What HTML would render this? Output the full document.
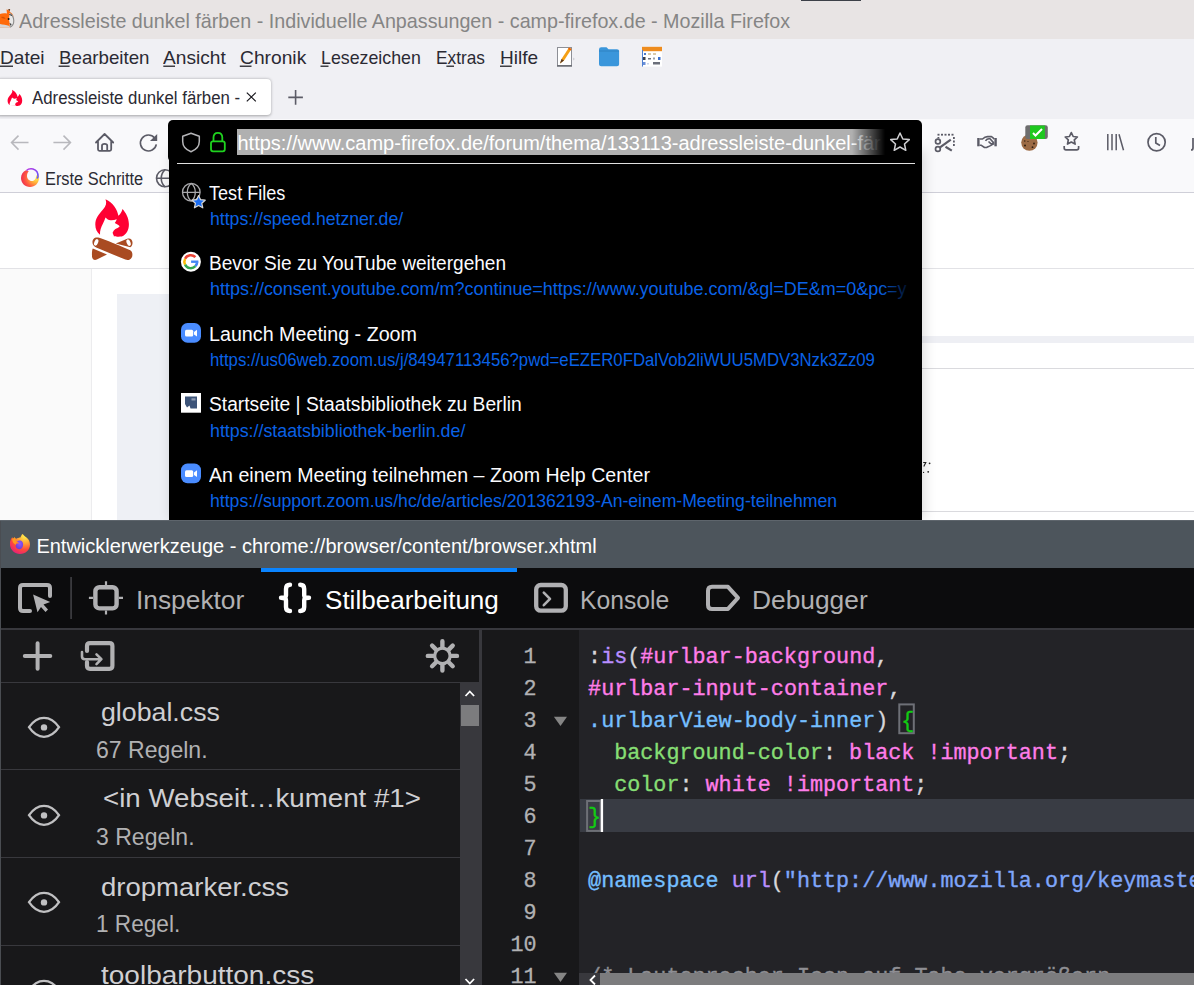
<!DOCTYPE html>
<html><head><meta charset="utf-8">
<style>
*{margin:0;padding:0;box-sizing:border-box}
html,body{width:1194px;height:985px;overflow:hidden;background:#f9f9fb;font-family:"Liberation Sans",sans-serif}
.a{position:absolute}
.t{position:absolute;white-space:pre;line-height:1;transform-origin:0 0}
svg{position:absolute;overflow:visible}
</style></head><body>
<div class="a" style="left:0;top:0;width:1194px;height:39px;background:#e8e4e4"></div>
<div class="a" style="left:801px;top:0;width:60px;height:1px;background:#3c4048"></div>
<div class="a" style="left:0;top:39px;width:1194px;height:40px;background:#f0f0f4"></div>
<div class="a" style="left:0;top:79px;width:1194px;height:40px;background:#f0f0f4"></div>
<div class="a" style="left:-4px;top:79px;width:275px;height:36px;background:#fff;border-radius:4px;box-shadow:0 0.5px 3px rgba(0,0,0,.32)"></div>
<div class="a" style="left:0;top:119px;width:1194px;height:73px;background:#f9f9fb"></div>
<div class="a" style="left:0;top:192px;width:1194px;height:1px;background:#cfcfd8"></div>
<!-- page -->
<div class="a" style="left:0;top:193px;width:1194px;height:75px;background:#fff"></div>
<div class="a" style="left:0;top:268px;width:1194px;height:1px;background:#e2e2e6"></div>
<div class="a" style="left:0;top:269px;width:91px;height:251px;background:#fafafa"></div>
<div class="a" style="left:91px;top:269px;width:1px;height:251px;background:#ececee"></div>
<div class="a" style="left:92px;top:269px;width:1102px;height:251px;background:#fff"></div>
<div class="a" style="left:117px;top:294px;width:60px;height:226px;background:#eef0f5"></div>
<div class="a" style="left:922px;top:336px;width:272px;height:7px;background:#eeeff4"></div>
<div class="a" style="left:922px;top:368px;width:272px;height:1px;background:#dadade"></div>
<div class="a" style="left:922px;top:511px;width:272px;height:1px;background:#dadade"></div>
<svg style="left:0;top:0" width="1194" height="985" viewBox="0 0 1194 985">
<!-- title ff icon partial -->
<defs>
<radialGradient id="ffb" cx="0.75" cy="0.1" r="1.05"><stop offset="0" stop-color="#fff44f"/><stop offset="0.35" stop-color="#ffa436"/><stop offset="0.65" stop-color="#ff4a3a"/><stop offset="1" stop-color="#e31587"/></radialGradient>
<radialGradient id="ffp" cx="0.55" cy="0.35" r="0.7"><stop offset="0" stop-color="#9059ff"/><stop offset="1" stop-color="#6a3bd0"/></radialGradient>
<symbol id="ff" viewBox="0 0 20 20">
<path d="M12.5,0 C14,1.5 15,2.5 16.5,3.5 C19,5.5 20,8 20,10.5 C20,16 15.5,20 10,20 C4.5,20 0,15.5 0,10 C0,7 1,4.8 2.3,3.3 L3,5 L4.5,3.3 L6,5 C7,4 9.5,3.5 10.5,3.5 C11,2.5 11.5,1 12.5,0 Z" fill="url(#ffb)"/>
<path d="M2.3,3.3 L3,5 L4.5,3.3 L6,5 C5.5,6 6,7.5 7.5,8 C6.5,8.5 5.5,9.5 6,11 L3.5,9 C2.5,7.5 2,5.5 2.3,3.3 Z" fill="#ff9a1f"/>
<path d="M7,7.2 C8.5,6.5 11.5,6.3 12.5,8 C13.5,9.5 13.5,12.5 11.5,14.5 C9.5,16 6.5,15 5.8,12.5 C5.5,11 6,10 7.5,9.5 L9.2,9.6 C9,8.7 8,8 7,7.2 Z" fill="url(#ffp)"/>
</symbol>
</defs>
<path d="M0,14 C2,13 5,13 7,13.5 L6.5,9.5 C8,9.5 9.5,10.5 10,12 L12,13.5 L13.5,16 L14,22 C13,25 11.5,27 9,27.5 L0,27.7 Z" fill="#ff6a0a"/>
<path d="M9.5,13 C11,13.5 13,15 13.8,17 L14,23 C13.5,25.5 12,27 9.5,27.6 C10,25 9.5,22 9,20 Z" fill="#e8e8e8"/>
<path d="M0,24 C3,24.5 6,25 9.5,26 L9,27.7 L0,27.7 Z" fill="#d6d6d6"/>
<circle cx="8.6" cy="19" r="1" fill="#111"/>
<path d="M9.5,23 L11.5,24 L10.8,26 Z" fill="#222"/>
<path d="M10,13.5 C12.5,15 13.6,17.5 13.8,20.5 C13.9,23.5 12.5,26 10,27.3" stroke="#8a8a8a" stroke-width="1.1" fill="none"/>
<path d="M8,9.3 L10.2,9 L9.5,11.5 Z" fill="#6b3a1a"/>
<path d="M9.2,14.5 L12,15.5" stroke="#333" stroke-width="0.9"/>
<path d="M1,17 C3,16.5 4.5,17 5.5,18.5 C4,19 2,18.5 1,17 Z" fill="#b84300" opacity=".6"/>
<!-- menu underlines -->
<g fill="#15141a">
<rect x="0" y="65.6" width="13" height="1.2"/>
<rect x="58.6" y="65.6" width="11" height="1.2"/>
<rect x="163.3" y="65.6" width="11.7" height="1.2"/>
<rect x="239.8" y="65.6" width="11.7" height="1.2"/>
<rect x="320.5" y="65.6" width="8" height="1.2"/>
<rect x="446.4" y="65.6" width="7.6" height="1.2"/>
<rect x="500" y="65.6" width="11.7" height="1.2"/>
</g>
<!-- notepad icon -->
<g>
<rect x="557.5" y="47.5" width="14" height="18.5" fill="#fff" stroke="#8d8f96" stroke-width="1"/>
<rect x="557" y="65" width="15" height="1.6" fill="#6d6f76"/>
<path d="M560,63.5 L561.5,59 L569,47.5 L571.5,49 L564,60.5 Z" fill="#f5a014"/>
<path d="M569,47.5 L571.5,49 L570.5,50.5 L568,49 Z" fill="#e9640c"/>
<path d="M560,63.5 L561.5,59 L564,60.5 Z" fill="#5a3a22"/>
<path d="M573,57.5 L575,59 L573,60.5 Z" fill="#d0d0d6"/>
</g>
<!-- folder -->
<path d="M599,49.5 Q599,47.2 601.3,47.2 L606.5,47.2 L608.5,49.2 L617,49.2 Q619.1,49.2 619.1,51.4 L619.1,64.2 Q619.1,66.3 617,66.3 L601.2,66.3 Q599,66.3 599,64.2 Z" fill="#3a96db"/>
<path d="M599,51 L619.1,51" stroke="#2f82c2" stroke-width="1"/>
<!-- calendar -->
<g>
<rect x="642" y="46.8" width="20" height="19.8" fill="#fff"/>
<rect x="642" y="46.8" width="20" height="4.4" fill="#ee8c1e"/>
<rect x="644" y="53" width="2" height="2" fill="#4a79c8"/><rect x="648" y="53" width="3" height="2" fill="#d9c9a8"/><rect x="653" y="53" width="3" height="2" fill="#d9c9a8"/>
<rect x="643" y="57" width="2.5" height="3" fill="#3b3f4a"/><rect x="648" y="58" width="3" height="1.5" fill="#6b6f7a"/><rect x="653" y="57.5" width="2" height="2" fill="#9aa0aa"/><rect x="658" y="57" width="2.5" height="3" fill="#3a6fd0"/>
<rect x="643" y="62" width="2.5" height="3" fill="#6a8fd8"/><rect x="647" y="63" width="2" height="1.5" fill="#c8d4ea"/><rect x="653" y="62" width="7" height="2.5" fill="#6b6f7a"/>
<rect x="642" y="50" width="1" height="16.6" fill="#4d7fd0"/>
</g>
<!-- tab flame favicon -->
<g transform="translate(7.5 89.8) scale(0.435 0.43) translate(-95.1 -199.3)"><path d="M105.5,199.3 C107,203 106,206 103,209.5 C98,215 95.3,219 95.3,224.5 C95.3,229 97,232.5 100,234.8 L114.5,236.3 C116,236.8 119,236.8 121.8,236.6 C126.5,234.5 129,230 128.9,224 C128.7,217.5 126,213 122.5,208.9 C121.8,211.5 120.5,214 118.3,215.8 C117.5,210 113.5,203 105.5,199.3 Z" fill="#ff0033"/><path d="M100,234.6 C99.8,231 101,227 103,223.5 C104,221.5 104.8,219.5 105.5,217.4 C107,219 108.5,220 110.5,220.3 C112.5,220.5 114.8,220 116.8,219.2 C116.3,220.8 115.6,222 114.8,223 C116.5,223.8 118.5,225 119.7,226.3 C118.5,227.8 116.8,228.6 115.4,229.1 C114.2,230 113.3,231.3 112.6,232.7 C113,234 113.6,235.3 114.2,236.4 L100.5,236.4 Z" fill="#fff"/></g>
<!-- tab close x and + -->
<path d="M246.8,92.6 L255.8,101.4 M255.8,92.6 L246.8,101.4" stroke="#15141a" stroke-width="1.15"/>
<path d="M288.3,97.4 L302.9,97.4 M295.6,90 L295.6,104.7" stroke="#5b5b66" stroke-width="1.6"/>
<!-- nav back/forward -->
<path d="M28.5,142.6 L11.8,142.6 M18.5,135.6 L11.5,142.6 L18.5,149.6" stroke="#b8b8bd" stroke-width="1.5" fill="none"/>
<path d="M53.4,142.6 L70.3,142.6 M63.5,135.6 L70.5,142.6 L63.5,149.6" stroke="#b8b8bd" stroke-width="1.5" fill="none"/>
<!-- home -->
<path d="M96,142.5 L104.6,134 L113.2,142.5 M98,140.5 L98,149.3 Q98,150.8 99.5,150.8 L109.7,150.8 Q111.2,150.8 111.2,149.3 L111.2,140.5 M102,150.8 L102,145.5 Q102,143.8 104.6,143.8 Q107.2,143.8 107.2,145.5 L107.2,150.8" stroke="#5b5b66" stroke-width="1.8" fill="none" stroke-linejoin="round" stroke-linecap="round"/>
<!-- reload -->
<path d="M154.6,137.9 A8,8 0 1 0 156.3,144.4" stroke="#5b5b66" stroke-width="1.65" fill="none"/>
<path d="M157.2,133.9 L157.2,141.1 L150,141.1 Z" fill="#5b5b66"/>
<!-- right nav icons -->
<g fill="#5b5b66">
<rect x="937.5" y="133.8" width="2" height="1.8"/><rect x="941" y="133.8" width="2" height="1.8"/><rect x="944.5" y="133.8" width="2" height="1.8"/><rect x="948" y="133.8" width="2" height="1.8"/><rect x="951.5" y="133.8" width="2" height="1.8"/>
<rect x="953" y="137" width="1.8" height="2"/><rect x="953" y="140.5" width="1.8" height="2"/><rect x="953" y="144" width="1.8" height="2"/>
<rect x="937.5" y="137" width="1.8" height="1.5"/>
</g>
<g stroke="#5b5b66" stroke-width="1.7" fill="none">
<circle cx="937.9" cy="141.5" r="2.4"/><circle cx="937.9" cy="149" r="2.4"/>
<path d="M940,147.3 L950.8,139.6" stroke-width="2.2"/>
<path d="M945.5,146.8 L951.8,150.6" stroke-width="2.2"/>
</g>
<!-- handshake -->
<g fill="#5b5b66"><rect x="977.2" y="138" width="2.4" height="8.3"/><rect x="994.4" y="138" width="2.4" height="8.3"/></g>
<g stroke="#5b5b66" stroke-width="1.6" fill="none" stroke-linejoin="round">
<path d="M979.6,139 L982.5,139 C984,137.5 985.5,136.6 987.5,136.6 L991.5,136.6 C992.5,137.2 993.3,138.2 994.4,139"/>
<path d="M979.6,145.2 L981,145.2 L984.5,147.5 L986.5,147.5 L988.5,146.6 L990.5,145.6 L993,144 L994.4,144"/>
<path d="M985.5,140.8 C986.5,139.2 988,138.4 990,138.8 L993.5,142.6 C992.8,143.8 991.8,144.2 990.8,143.6 L988.5,141.5"/>
</g>
<g stroke="#5b5b66" stroke-width="1.7" fill="none">
<!-- star tray -->
<path d="M1071.3,132.6 L1073.2,136.5 L1077.4,137 L1074.3,139.9 L1075.1,144.1 L1071.3,142 L1067.5,144.1 L1068.3,139.9 L1065.2,137 L1069.4,136.5 Z" stroke-linejoin="round"/>
<path d="M1064.2,146 L1064.2,148 Q1064.2,149.8 1066,149.8 L1076.8,149.8 Q1078.6,149.8 1078.6,148 L1078.6,146"/>
<!-- library -->
<path d="M1107.8,134 L1107.8,150.3 M1112,134 L1112,150.3 M1116.2,134 L1116.2,150.3 M1119,134.3 L1123.5,150.3" stroke-width="1.5"/>
<!-- clock -->
<circle cx="1156.6" cy="142.2" r="8.6"/>
<path d="M1155.8,137 L1155.8,143 L1160,145.5"/>
<!-- partial -->
<path d="M1193,138 L1193,148 Q1193,150 1191,150"/>
</g>
<!-- cookie -->
<circle cx="1029.4" cy="142.6" r="8.2" fill="#9c6b45"/>
<g fill="#2f1c0e"><circle cx="1025" cy="145.6" r="1"/><circle cx="1032.5" cy="147.2" r="0.9"/><circle cx="1034" cy="143.5" r="0.9"/><circle cx="1024.8" cy="141" r="0.7"/><circle cx="1028" cy="141.5" r="0.6"/></g>
<rect x="1025.3" y="125.2" width="22.5" height="13.8" rx="2.2" fill="#6e6e6e"/>
<rect x="1030" y="125.5" width="14.9" height="13.5" fill="#1ec81e"/>
<path d="M1033,133 L1035.5,135.5 L1042,129" stroke="#fff" stroke-width="2" fill="none"/>
<!-- bookmarks ff logo -->
<defs><radialGradient id="ffb2" cx="0.85" cy="0.45" r="1"><stop offset="0" stop-color="#fff44f"/><stop offset="0.3" stop-color="#ffb03a"/><stop offset="0.6" stop-color="#ff5a40"/><stop offset="1" stop-color="#e31557"/></radialGradient>
<linearGradient id="ffarc" x1="0" y1="0" x2="1" y2="1"><stop offset="0" stop-color="#b833e1"/><stop offset="1" stop-color="#5b5bff"/></linearGradient></defs>
<path d="M26,170.2 C23,171.5 21,174.5 21,178 C21,183 25,187 30,187 C35,187 39,183 39,178 C39,176.5 38.7,175.3 38.2,174.2 L36,176 C36,179.5 34,181 32,181 C29,181 27,178.5 27,176 C27,174 27.5,172.5 28.8,171.2 Z" fill="url(#ffb2)"/>
<path d="M26.5,170.5 C28,169 30.5,168.6 33,169 C36.5,170 38.3,173 38,177 L36.7,178.5" stroke="url(#ffarc)" stroke-width="1.5" fill="none"/>
<!-- bookmarks globe -->
<g stroke="#5b5b66" stroke-width="1.6" fill="none">
<circle cx="165" cy="178.3" r="8.5"/>
<path d="M156.5,178.3 L173.5,178.3 M165,169.8 C160,174 160,182.6 165,186.8"/>
</g>
<!-- campfire logo -->
<path d="M105.5,199.3 C107,203 106,206 103,209.5 C98,215 95.3,219 95.3,224.5 C95.3,229 97,232.5 100,234.8 L114.5,236.3 C116,236.8 119,236.8 121.8,236.6 C126.5,234.5 129,230 128.9,224 C128.7,217.5 126,213 122.5,208.9 C121.8,211.5 120.5,214 118.3,215.8 C117.5,210 113.5,203 105.5,199.3 Z" fill="#ff0033"/>
<path d="M100,234.6 C99.8,231 101,227 103,223.5 C104,221.5 104.8,219.5 105.5,217.4 C107,219 108.5,220 110.5,220.3 C112.5,220.5 114.8,220 116.8,219.2 C116.3,220.8 115.6,222 114.8,223 C116.5,223.8 118.5,225 119.7,226.3 C118.5,227.8 116.8,228.6 115.4,229.1 C114.2,230 113.3,231.3 112.6,232.7 C113,234 113.6,235.3 114.2,236.4 L100.5,236.4 Z" fill="#fff"/>
<g fill="#a94b22">
<path d="M96,237.6 C98,237 100.5,237.8 118,245 L130.2,250.2 C132.6,251.5 133,255.5 131.6,257.8 C130.2,260 127.8,260.6 125.3,259.6 L96.2,247.6 C92.8,246.2 91.6,242.3 93,239.8 C93.6,238.6 94.7,237.9 96,237.6 Z"/>
<path d="M115.8,243.6 L127.2,238.8 C129.8,237.6 132.2,239.2 132.5,242.2 C132.7,244.6 131.8,246.3 130.3,247.2 Z"/>
<path d="M92.8,248.6 L107,254.4 L96.8,259.6 C94.2,260.8 92.1,259.2 92,256.2 C91.9,252.5 91.9,250.2 92.8,248.6 Z"/>
</g>
<ellipse cx="96.2" cy="242.4" rx="1.9" ry="3.4" fill="#fff" transform="rotate(22 96.2 242.4)"/>
<ellipse cx="128.6" cy="242.6" rx="1.9" ry="3.4" fill="#fff" transform="rotate(-22 128.6 242.6)"/>
</svg>

<!-- popup -->
<div class="a" style="left:169px;top:150px;width:753px;height:370px;background:#000;box-shadow:2px 0 12px rgba(0,0,0,.15)"></div>
<div class="a" style="left:168px;top:120px;width:754px;height:42px;background:#000;border-radius:5px 5px 0 5px"></div>
<div class="a" style="left:237px;top:129px;width:648px;height:26px;background:#b0b0b0"></div>

<div class="a" style="left:177px;top:163px;width:738px;height:1px;background:#e0e0e0"></div>
<!-- devtools -->
<div class="a" style="left:0;top:520px;width:1194px;height:48px;background:#4d555c"></div>
<div class="a" style="left:0;top:568px;width:1194px;height:60px;background:#0c0c0d"></div>
<div class="a" style="left:261px;top:568px;width:256px;height:4px;background:#0a84ff"></div>
<div class="a" style="left:71px;top:577px;width:1px;height:42px;background:#3a3a3e"></div>
<div class="a" style="left:0;top:628px;width:1194px;height:2px;background:#38383d"></div>
<div class="a" style="left:0;top:630px;width:479px;height:355px;background:#18181a"></div>
<div class="a" style="left:0;top:682px;width:479px;height:1px;background:#38383d"></div>
<div class="a" style="left:479px;top:630px;width:3px;height:355px;background:#38383d"></div>
<div class="a" style="left:460px;top:683px;width:19px;height:302px;background:#38383d"></div>
<div class="a" style="left:461px;top:705px;width:18px;height:21px;background:#7c7c7e"></div>
<div class="a" style="left:0;top:769px;width:460px;height:1px;background:#38383d"></div>
<div class="a" style="left:0;top:857px;width:460px;height:1px;background:#38383d"></div>
<div class="a" style="left:0;top:945px;width:460px;height:1px;background:#38383d"></div>
<div class="a" style="left:0;top:520px;width:1px;height:465px;background:#4a4d52"></div>
<div class="a" style="left:0;top:520px;width:1194px;height:1px;background:#5e656c"></div>
<div class="a" style="left:482px;top:630px;width:97px;height:355px;background:#18181a"></div>
<div class="a" style="left:579px;top:630px;width:615px;height:355px;background:#232327"></div>
<div class="a" style="left:580px;top:799px;width:614px;height:33px;background:#393c44"></div>
<svg style="left:0;top:0" width="1194" height="985" viewBox="0 0 1194 985">
<!-- popup shield -->
<path d="M191,133.2 L199.3,136.2 L199.3,141.5 C199.3,146.5 196,149.8 191,151.7 C186,149.8 182.7,146.5 182.7,141.5 L182.7,136.2 Z" stroke="#b5b5b8" stroke-width="1.5" fill="none" stroke-linejoin="round"/>
<!-- lock -->
<rect x="211" y="141.3" width="13.8" height="10" rx="2" stroke="#1fd21f" stroke-width="1.8" fill="none"/>
<path d="M213.5,141.3 L213.5,137.5 C213.5,134.5 215.5,132.8 217.9,132.8 C220.3,132.8 222.3,134.5 222.3,137.5 L222.3,141.3" stroke="#1fd21f" stroke-width="1.8" fill="none"/>
<!-- popup star -->
<path d="M900,133 L902.8,139 L909.3,139.6 L904.5,144 L905.8,150.3 L900,147 L894.2,150.3 L895.5,144 L890.7,139.6 L897.2,139 Z" stroke="#d0d0d3" stroke-width="1.5" fill="none" stroke-linejoin="round"/>
<!-- row1 globe + star -->
<g stroke="#a8a8ab" stroke-width="1.3" fill="none">
<circle cx="191.3" cy="192.3" r="8.8"/>
<path d="M182.5,192.3 L200,192.3 M191.3,183.5 C186,187.5 186,197 191.3,201 M191.3,183.5 C196.6,187.5 196.6,197 191.3,201"/>
</g>
<path d="M198.6,195.5 L200.6,199.7 L205.2,200.2 L201.8,203.3 L202.8,207.8 L198.6,205.4 L194.4,207.8 L195.4,203.3 L192,200.2 L196.6,199.7 Z" fill="#1a6cf0" stroke="#d8d8d8" stroke-width="1.2" stroke-linejoin="round"/>
<!-- google -->
<circle cx="190.9" cy="261.7" r="10" fill="#fff"/>
<rect x="191.1" y="260.5" width="7.3" height="2.4" fill="#4285f4"/>
<path d="M197.1,262.5 A6.3,6.3 0 0 1 195.4,266.2" stroke="#4285f4" stroke-width="2.5" fill="none"/>
<path d="M195.4,257.2 A6.3,6.3 0 0 0 185.1,258.8" stroke="#ea4335" stroke-width="2.5" fill="none"/>
<path d="M185.1,258.8 A6.3,6.3 0 0 0 185.1,264.6" stroke="#fbbc05" stroke-width="2.5" fill="none"/>
<path d="M185.1,264.6 A6.3,6.3 0 0 0 195.4,266.2" stroke="#34a853" stroke-width="2.5" fill="none"/>
<!-- zoom 1 -->
<rect x="181" y="323" width="20" height="19.7" rx="6.5" fill="#4a8cff"/>
<rect x="185" y="329.8" width="8.2" height="6.8" rx="1.5" fill="#fff"/>
<path d="M194,332 L197,329.8 L197,336.5 L194,334.5 Z" fill="#fff"/>
<!-- staatsbib -->
<rect x="181" y="393" width="20" height="19.7" fill="#fff"/>
<path d="M185,396.6 L197,396.6 L197,408.5 L190.5,408.5 L189.5,405.5 L187,407.5 L185,404 Z" fill="#3d5479"/>
<rect x="191.5" y="398.3" width="4" height="2.2" fill="#8d9bb2"/>
<!-- zoom 2 -->
<rect x="181" y="463.5" width="20" height="19.7" rx="6.5" fill="#4a8cff"/>
<rect x="185" y="470.3" width="8.2" height="6.8" rx="1.5" fill="#fff"/>
<path d="M194,472.5 L197,470.3 L197,477 L194,475 Z" fill="#fff"/>

<!-- devtools title ff icon -->
<use href="#ff" x="9.9" y="533.9" width="20.1" height="20.1"/>
<!-- devtools picker -->
<g stroke="#b1b1b3" stroke-width="4" fill="none" stroke-linecap="round" stroke-linejoin="round">
<path d="M50,596 L50,588 Q50,585 47,585 L23,585 Q20,585 20,588 L20,608 Q20,611 23,611 L30,611"/>
<path d="M106,581.2 L106,585 M106,610.5 L106,614.6 M88.9,597.8 L93,597.8 M118.8,597.8 L123,597.8" stroke-width="2.2" stroke-linecap="butt"/>
<rect x="95.4" y="587.2" width="21.2" height="21.2" rx="4" stroke-width="4.4"/>
</g>
<path d="M33.1,594.6 L50.2,602 L43.5,604.5 L48,609.5 L45.5,612 L41,607 L37.5,612.2 Z" fill="#b1b1b3"/>
<rect x="70.2" y="577" width="1.6" height="42" fill="#3b3b3f"/>
<!-- braces -->
<g stroke="#fff" stroke-width="4.4" fill="none" stroke-linecap="round" stroke-linejoin="round">
<path d="M290,584.8 Q286,584.8 286,589 L286,595.5 Q286,597.8 281,597.8 Q286,597.8 286,600.2 L286,607 Q286,611 290,611"/>
<path d="M300.2,584.8 Q304.2,584.8 304.2,589 L304.2,595.5 Q304.2,597.8 309,597.8 Q304.2,597.8 304.2,600.2 L304.2,607 Q304.2,611 300.2,611"/>
</g>
<!-- console -->
<rect x="536.2" y="585" width="29.6" height="25.7" rx="4.5" stroke="#b1b1b3" stroke-width="4.3" fill="none"/>
<path d="M543.8,592.6 L550,598.9 L543.8,605.2" stroke="#b1b1b3" stroke-width="2.6" fill="none" stroke-linecap="round" stroke-linejoin="round"/>
<!-- debugger -->
<path d="M712,586.8 L728,586.8 L738,597.8 L728,608.9 L712,608.9 Q708,608.9 708,604.9 L708,590.8 Q708,586.8 712,586.8 Z" stroke="#b1b1b3" stroke-width="4" fill="none" stroke-linejoin="round"/>
<!-- left toolbar -->
<g stroke="#b1b1b3" fill="none" stroke-linecap="round">
<path d="M24.8,656.1 L50.3,656.1 M37.6,643.2 L37.6,668.7" stroke-width="4"/>
<path d="M87,651 L87,646 Q87,643.2 90,643.2 L109.5,643.2 Q112.4,643.2 112.4,646 L112.4,665.8 Q112.4,668.8 109.5,668.8 L90,668.8 Q87,668.8 87,665.8 L87,662" stroke-width="4.2"/>
<path d="M82,652 L82,656.5 Q82,659.2 85,659.2 L101,659.2 M96.5,654.3 L101.4,659.2 L96.5,664.1" stroke-width="2.6" stroke-linejoin="round"/>
</g>
<!-- gear -->
<g stroke="#b1b1b3" fill="none">
<circle cx="442.4" cy="655.9" r="7.7" stroke-width="3.2"/>
<g stroke-width="4.4" stroke-linecap="round">
<path d="M442.4,641.3 L442.4,647 M442.4,664.8 L442.4,670.5 M427.8,655.9 L433.5,655.9 M451.3,655.9 L457,655.9 M432.1,645.6 L436.1,649.6 M448.7,662.2 L452.7,666.2 M452.7,645.6 L448.7,649.6 M436.1,662.2 L432.1,666.2"/>
</g>
</g>
<!-- eyes -->
<g stroke="#c0c0c2" stroke-width="2.3" fill="none">
<path d="M29,727.2 C33.5,720.5 38.5,717.8 44,717.8 C49.5,717.8 54.5,720.5 59,727.2 C54.5,733.9 49.5,736.8 44,736.8 C38.5,736.8 33.5,733.9 29,727.2 Z"/>
<path d="M29,815.2 C33.5,808.5 38.5,805.8 44,805.8 C49.5,805.8 54.5,808.5 59,815.2 C54.5,821.9 49.5,824.8 44,824.8 C38.5,824.8 33.5,821.9 29,815.2 Z"/>
<path d="M29,902.2 C33.5,895.5 38.5,892.8 44,892.8 C49.5,892.8 54.5,895.5 59,902.2 C54.5,908.9 49.5,911.8 44,911.8 C38.5,911.8 33.5,908.9 29,902.2 Z"/>
<path d="M29,990.2 C33.5,983.5 38.5,980.8 44,980.8 C49.5,980.8 54.5,983.5 59,990.2"/>
</g>
<g fill="#c0c0c2"><circle cx="44" cy="727.4" r="3.2"/><circle cx="44" cy="815.4" r="3.2"/><circle cx="44" cy="902.4" r="3.2"/></g>
<!-- scrollbar arrows -->
<path d="M465.5,696 L469.8,691.5 L474.1,696" stroke="#fff" stroke-width="1.8" fill="none"/>
<path d="M465.5,979 L469.8,983.5 L474.1,979" stroke="#fff" stroke-width="1.8" fill="none"/>
<!-- fold triangles -->
<path d="M553.9,716.7 L567,716.7 L560.5,726 Z" fill="#858585"/>
<path d="M553.9,972.7 L567,972.7 L560.5,982 Z" fill="#858585"/>
<!-- bracket boxes & cursor -->
<rect x="587.1" y="801" width="13.5" height="29.9" stroke="#6e7077" stroke-width="2" fill="none"/>
<rect x="899.3" y="704.4" width="14.5" height="28.8" stroke="#6e7077" stroke-width="2" fill="none"/>
<rect x="600.8" y="799" width="2.3" height="33" fill="#fff"/>
<!-- h scrollbar arrow -->
<path d="M595,975.5 L590.5,980 L595,984.5" stroke="#fff" stroke-width="1.8" fill="none"/>
</svg>

<span class="t" id="t0" style="left:19.00px;top:11.05px;font-size:20.3px;color:#858585;font-family:'Liberation Sans',sans-serif;transform:scaleX(0.9717);">Adressleiste dunkel färben - Individuelle Anpassungen - camp-firefox.de - Mozilla Firefox</span>
<span class="t" id="t1" style="left:0.00px;top:47.65px;font-size:19px;color:#2b2a33;font-family:'Liberation Sans',sans-serif;transform:scaleX(1.0042);">Datei</span>
<span class="t" id="t2" style="left:58.60px;top:47.65px;font-size:19px;color:#2b2a33;font-family:'Liberation Sans',sans-serif;transform:scaleX(0.9849);">Bearbeiten</span>
<span class="t" id="t3" style="left:163.30px;top:47.65px;font-size:19px;color:#2b2a33;font-family:'Liberation Sans',sans-serif;transform:scaleX(1.0070);">Ansicht</span>
<span class="t" id="t4" style="left:239.80px;top:47.65px;font-size:19px;color:#2b2a33;font-family:'Liberation Sans',sans-serif;transform:scaleX(1.0117);">Chronik</span>
<span class="t" id="t5" style="left:320.80px;top:47.65px;font-size:19px;color:#2b2a33;font-family:'Liberation Sans',sans-serif;transform:scaleX(0.9359);">Lesezeichen</span>
<span class="t" id="t6" style="left:435.70px;top:47.65px;font-size:19px;color:#2b2a33;font-family:'Liberation Sans',sans-serif;transform:scaleX(0.9086);">Extras</span>
<span class="t" id="t7" style="left:500.00px;top:47.65px;font-size:19px;color:#2b2a33;font-family:'Liberation Sans',sans-serif;transform:scaleX(1.0034);">Hilfe</span>
<span class="t" id="t8" style="left:32.20px;top:88.70px;font-size:18px;color:#2b2a33;font-family:'Liberation Sans',sans-serif;transform:scaleX(0.9327);">Adressleiste dunkel färben -</span>
<span class="t" id="t9" style="left:45.20px;top:170.00px;font-size:18px;color:#2b2a33;font-family:'Liberation Sans',sans-serif;transform:scaleX(0.9087);">Erste Schritte</span>
<span class="t" id="t10" style="left:237.50px;top:132.90px;font-size:20px;color:#fff;font-family:'Liberation Sans',sans-serif;">https://www.camp-firefox.de/forum/thema/133113-adressleiste-dunkel-fär</span>
<span class="t" id="t11" style="left:208.70px;top:183.84px;font-size:19.6px;color:#fbfbfe;font-family:'Liberation Sans',sans-serif;transform:scaleX(0.9231);">Test Files</span>
<span class="t" id="t12" style="left:209.50px;top:210.88px;font-size:17.9px;color:#0a62e6;font-family:'Liberation Sans',sans-serif;transform:scaleX(0.9857);">https://speed.hetzner.de/</span>
<span class="t" id="t13" style="left:208.70px;top:254.39px;font-size:19.6px;color:#fbfbfe;font-family:'Liberation Sans',sans-serif;transform:scaleX(0.9727);">Bevor Sie zu YouTube weitergehen</span>
<span class="t" id="t14" style="left:209.50px;top:281.44px;font-size:17.9px;color:#0a62e6;font-family:'Liberation Sans',sans-serif;transform:scaleX(1.0035);">https://consent.youtube.com/m?continue=https://www.youtube.com/&amp;gl=DE&amp;m=0&amp;pc=y</span>
<span class="t" id="t15" style="left:208.70px;top:324.94px;font-size:19.6px;color:#fbfbfe;font-family:'Liberation Sans',sans-serif;transform:scaleX(1.0050);">Launch Meeting - Zoom</span>
<span class="t" id="t16" style="left:209.50px;top:351.98px;font-size:17.9px;color:#0a62e6;font-family:'Liberation Sans',sans-serif;transform:scaleX(0.9362);">https://us06web.zoom.us/j/84947113456?pwd=eEZER0FDalVob2liWUU5MDV3Nzk3Zz09</span>
<span class="t" id="t17" style="left:208.70px;top:395.49px;font-size:19.6px;color:#fbfbfe;font-family:'Liberation Sans',sans-serif;transform:scaleX(0.9811);">Startseite | Staatsbibliothek zu Berlin</span>
<span class="t" id="t18" style="left:209.50px;top:422.53px;font-size:17.9px;color:#0a62e6;font-family:'Liberation Sans',sans-serif;transform:scaleX(0.9953);">https://staatsbibliothek-berlin.de/</span>
<span class="t" id="t19" style="left:208.70px;top:466.04px;font-size:19.6px;color:#fbfbfe;font-family:'Liberation Sans',sans-serif;transform:scaleX(0.9997);">An einem Meeting teilnehmen – Zoom Help Center</span>
<span class="t" id="t20" style="left:209.50px;top:493.08px;font-size:17.9px;color:#0a62e6;font-family:'Liberation Sans',sans-serif;transform:scaleX(0.9851);">https://support.zoom.us/hc/de/articles/201362193-An-einem-Meeting-teilnehmen</span>
<span class="t" id="t21" style="left:36.40px;top:535.60px;font-size:20px;color:#ffffff;font-family:'Liberation Sans',sans-serif;transform:scaleX(1.0000);">Entwicklerwerkzeuge - chrome://browser/content/browser.xhtml</span>
<span class="t" id="t22" style="left:135.50px;top:586.85px;font-size:26.3px;color:#b1b1b3;font-family:'Liberation Sans',sans-serif;transform:scaleX(1.0010);">Inspektor</span>
<span class="t" id="t23" style="left:325.00px;top:586.85px;font-size:26.3px;color:#ffffff;font-family:'Liberation Sans',sans-serif;transform:scaleX(0.9910);">Stilbearbeitung</span>
<span class="t" id="t24" style="left:580.20px;top:586.85px;font-size:26.3px;color:#b1b1b3;font-family:'Liberation Sans',sans-serif;transform:scaleX(0.9395);">Konsole</span>
<span class="t" id="t25" style="left:752.30px;top:586.85px;font-size:26.3px;color:#b1b1b3;font-family:'Liberation Sans',sans-serif;transform:scaleX(1.0016);">Debugger</span>
<span class="t" id="t26" style="left:100.50px;top:699.38px;font-size:26.5px;color:#cfcfd2;font-family:'Liberation Sans',sans-serif;transform:scaleX(1.0090);">global.css</span>
<span class="t" id="t27" style="left:96.30px;top:737.50px;font-size:24px;color:#b1b1b3;font-family:'Liberation Sans',sans-serif;transform:scaleX(0.9612);">67 Regeln.</span>
<span class="t" id="t28" style="left:102.60px;top:785.18px;font-size:26.5px;color:#cfcfd2;font-family:'Liberation Sans',sans-serif;transform:scaleX(1.0441);">&lt;in Webseit…kument #1&gt;</span>
<span class="t" id="t29" style="left:96.30px;top:825.00px;font-size:24px;color:#b1b1b3;font-family:'Liberation Sans',sans-serif;transform:scaleX(0.9594);">3 Regeln.</span>
<span class="t" id="t30" style="left:100.50px;top:873.98px;font-size:26.5px;color:#cfcfd2;font-family:'Liberation Sans',sans-serif;transform:scaleX(1.0376);">dropmarker.css</span>
<span class="t" id="t31" style="left:96.30px;top:912.10px;font-size:24px;color:#b1b1b3;font-family:'Liberation Sans',sans-serif;transform:scaleX(0.9426);">1 Regel.</span>
<span class="t" id="t32" style="left:100.50px;top:961.98px;font-size:26.5px;color:#cfcfd2;font-family:'Liberation Sans',sans-serif;transform:scaleX(1.0562);">toolbarbutton.css</span>
<span class="t" id="t33" style="left:523.45px;top:647.27px;font-size:21.75px;color:#b1b1b3;font-family:'Liberation Mono',monospace;-webkit-text-stroke:0.3px #b1b1b3;">1</span>
<span class="t" id="t34" style="left:523.45px;top:679.27px;font-size:21.75px;color:#b1b1b3;font-family:'Liberation Mono',monospace;-webkit-text-stroke:0.3px #b1b1b3;">2</span>
<span class="t" id="t35" style="left:523.45px;top:711.27px;font-size:21.75px;color:#b1b1b3;font-family:'Liberation Mono',monospace;-webkit-text-stroke:0.3px #b1b1b3;">3</span>
<span class="t" id="t36" style="left:523.45px;top:743.27px;font-size:21.75px;color:#b1b1b3;font-family:'Liberation Mono',monospace;-webkit-text-stroke:0.3px #b1b1b3;">4</span>
<span class="t" id="t37" style="left:523.45px;top:775.27px;font-size:21.75px;color:#b1b1b3;font-family:'Liberation Mono',monospace;-webkit-text-stroke:0.3px #b1b1b3;">5</span>
<span class="t" id="t38" style="left:523.45px;top:807.27px;font-size:21.75px;color:#b1b1b3;font-family:'Liberation Mono',monospace;-webkit-text-stroke:0.3px #b1b1b3;">6</span>
<span class="t" id="t39" style="left:523.45px;top:839.27px;font-size:21.75px;color:#b1b1b3;font-family:'Liberation Mono',monospace;-webkit-text-stroke:0.3px #b1b1b3;">7</span>
<span class="t" id="t40" style="left:523.45px;top:871.27px;font-size:21.75px;color:#b1b1b3;font-family:'Liberation Mono',monospace;-webkit-text-stroke:0.3px #b1b1b3;">8</span>
<span class="t" id="t41" style="left:523.45px;top:903.27px;font-size:21.75px;color:#b1b1b3;font-family:'Liberation Mono',monospace;-webkit-text-stroke:0.3px #b1b1b3;">9</span>
<span class="t" id="t42" style="left:510.40px;top:935.27px;font-size:21.75px;color:#b1b1b3;font-family:'Liberation Mono',monospace;-webkit-text-stroke:0.3px #b1b1b3;">10</span>
<span class="t" id="t43" style="left:510.40px;top:967.27px;font-size:21.75px;color:#b1b1b3;font-family:'Liberation Mono',monospace;-webkit-text-stroke:0.3px #b1b1b3;">11</span>
<span class="t" id="t44" style="left:588.10px;top:647.27px;font-size:21.75px;color:#d7d7db;font-family:'Liberation Mono',monospace;-webkit-text-stroke:0.35px #d7d7db;">:</span>
<span class="t" id="t45" style="left:601.15px;top:647.27px;font-size:21.75px;color:#b98eff;font-family:'Liberation Mono',monospace;-webkit-text-stroke:0.35px #b98eff;">is</span>
<span class="t" id="t46" style="left:627.25px;top:647.27px;font-size:21.75px;color:#d7d7db;font-family:'Liberation Mono',monospace;-webkit-text-stroke:0.35px #d7d7db;">(</span>
<span class="t" id="t47" style="left:640.30px;top:647.27px;font-size:21.75px;color:#ff7de9;font-family:'Liberation Mono',monospace;-webkit-text-stroke:0.35px #ff7de9;">#urlbar-background</span>
<span class="t" id="t48" style="left:875.20px;top:647.27px;font-size:21.75px;color:#d7d7db;font-family:'Liberation Mono',monospace;-webkit-text-stroke:0.35px #d7d7db;">,</span>
<span class="t" id="t49" style="left:588.10px;top:679.27px;font-size:21.75px;color:#ff7de9;font-family:'Liberation Mono',monospace;-webkit-text-stroke:0.35px #ff7de9;">#urlbar-input-container</span>
<span class="t" id="t50" style="left:888.25px;top:679.27px;font-size:21.75px;color:#d7d7db;font-family:'Liberation Mono',monospace;-webkit-text-stroke:0.35px #d7d7db;">,</span>
<span class="t" id="t51" style="left:588.10px;top:711.27px;font-size:21.75px;color:#75bfff;font-family:'Liberation Mono',monospace;-webkit-text-stroke:0.35px #75bfff;">.urlbarView-body-inner</span>
<span class="t" id="t52" style="left:875.20px;top:711.27px;font-size:21.75px;color:#d7d7db;font-family:'Liberation Mono',monospace;-webkit-text-stroke:0.35px #d7d7db;">)</span>
<span class="t" id="t53" style="left:888.25px;top:711.27px;font-size:21.75px;color:#d7d7db;font-family:'Liberation Mono',monospace;-webkit-text-stroke:0.35px #d7d7db;"> </span>
<span class="t" id="t54" style="left:901.30px;top:711.27px;font-size:21.75px;color:#12cc12;font-family:'Liberation Mono',monospace;-webkit-text-stroke:0.35px #12cc12;">{</span>
<span class="t" id="t55" style="left:588.10px;top:743.27px;font-size:21.75px;color:#d7d7db;font-family:'Liberation Mono',monospace;-webkit-text-stroke:0.35px #d7d7db;">  </span>
<span class="t" id="t56" style="left:614.20px;top:743.27px;font-size:21.75px;color:#86de74;font-family:'Liberation Mono',monospace;-webkit-text-stroke:0.35px #86de74;">background-color</span>
<span class="t" id="t57" style="left:823.00px;top:743.27px;font-size:21.75px;color:#d7d7db;font-family:'Liberation Mono',monospace;-webkit-text-stroke:0.35px #d7d7db;">:</span>
<span class="t" id="t58" style="left:836.05px;top:743.27px;font-size:21.75px;color:#d7d7db;font-family:'Liberation Mono',monospace;-webkit-text-stroke:0.35px #d7d7db;"> </span>
<span class="t" id="t59" style="left:849.10px;top:743.27px;font-size:21.75px;color:#ff7de9;font-family:'Liberation Mono',monospace;-webkit-text-stroke:0.35px #ff7de9;">black !important</span>
<span class="t" id="t60" style="left:1057.90px;top:743.27px;font-size:21.75px;color:#d7d7db;font-family:'Liberation Mono',monospace;-webkit-text-stroke:0.35px #d7d7db;">;</span>
<span class="t" id="t61" style="left:588.10px;top:775.27px;font-size:21.75px;color:#d7d7db;font-family:'Liberation Mono',monospace;-webkit-text-stroke:0.35px #d7d7db;">  </span>
<span class="t" id="t62" style="left:614.20px;top:775.27px;font-size:21.75px;color:#86de74;font-family:'Liberation Mono',monospace;-webkit-text-stroke:0.35px #86de74;">color</span>
<span class="t" id="t63" style="left:679.45px;top:775.27px;font-size:21.75px;color:#d7d7db;font-family:'Liberation Mono',monospace;-webkit-text-stroke:0.35px #d7d7db;">:</span>
<span class="t" id="t64" style="left:692.50px;top:775.27px;font-size:21.75px;color:#d7d7db;font-family:'Liberation Mono',monospace;-webkit-text-stroke:0.35px #d7d7db;"> </span>
<span class="t" id="t65" style="left:705.55px;top:775.27px;font-size:21.75px;color:#ff7de9;font-family:'Liberation Mono',monospace;-webkit-text-stroke:0.35px #ff7de9;">white !important</span>
<span class="t" id="t66" style="left:914.35px;top:775.27px;font-size:21.75px;color:#d7d7db;font-family:'Liberation Mono',monospace;-webkit-text-stroke:0.35px #d7d7db;">;</span>
<span class="t" id="t67" style="left:588.10px;top:807.27px;font-size:21.75px;color:#12cc12;font-family:'Liberation Mono',monospace;-webkit-text-stroke:0.35px #12cc12;">}</span>
<span class="t" id="t68" style="left:588.10px;top:871.27px;font-size:21.75px;color:#75bfff;font-family:'Liberation Mono',monospace;-webkit-text-stroke:0.35px #75bfff;">@namespace</span>
<span class="t" id="t69" style="left:718.60px;top:871.27px;font-size:21.75px;color:#d7d7db;font-family:'Liberation Mono',monospace;-webkit-text-stroke:0.35px #d7d7db;"> </span>
<span class="t" id="t70" style="left:731.65px;top:871.27px;font-size:21.75px;color:#b98eff;font-family:'Liberation Mono',monospace;-webkit-text-stroke:0.35px #b98eff;">url</span>
<span class="t" id="t71" style="left:770.80px;top:871.27px;font-size:21.75px;color:#d7d7db;font-family:'Liberation Mono',monospace;-webkit-text-stroke:0.35px #d7d7db;">(</span>
<span class="t" id="t72" style="left:783.85px;top:871.27px;font-size:21.75px;color:#7fa6fa;font-family:'Liberation Mono',monospace;-webkit-text-stroke:0.35px #7fa6fa;">"http://www.mozilla.org/keymaster/gatekeeper/there.is.only.xul"</span>
<span class="t" id="t73" style="left:1606.00px;top:871.27px;font-size:21.75px;color:#d7d7db;font-family:'Liberation Mono',monospace;-webkit-text-stroke:0.35px #d7d7db;">);</span>
<span class="t" id="t74" style="left:588.10px;top:967.27px;font-size:21.75px;color:#8e8e93;font-family:'Liberation Mono',monospace;-webkit-text-stroke:0.35px #8e8e93;">/* Lautsprecher Icon auf Tabs vergrößern</span>
<div class="a" style="left:579px;top:973px;width:615px;height:12px;background:#38383d"></div>
<div class="a" style="left:600px;top:973px;width:594px;height:12px;background:#7c7c7e"></div>
<svg style="left:0;top:0" width="1194" height="985"><path d="M595,975.5 L590.5,980 L595,984.5" stroke="#fff" stroke-width="1.8" fill="none"/></svg>
<div class="a" style="left:878px;top:276px;width:30px;height:28px;background:linear-gradient(90deg,rgba(0,0,0,0),rgba(0,0,0,.85))"></div>
<div class="a" style="left:908px;top:276px;width:14px;height:28px;background:#000"></div>
<svg style="left:0;top:0" width="1194" height="985"><path d="M923.2,462.5 L925.8,462.5 L923.8,466.5" stroke="#222" stroke-width="1.1" fill="none"/><circle cx="929.6" cy="463.3" r="0.9" fill="#222"/><circle cx="923.6" cy="472.4" r="0.6" fill="#222"/><circle cx="928.2" cy="471.8" r="0.9" fill="#222"/></svg>
<div class="a" style="left:852px;top:128px;width:33px;height:28px;background:linear-gradient(90deg,rgba(0,0,0,0),#000)"></div>
<div class="a" style="left:885px;top:128px;width:3px;height:28px;background:#000"></div>

</body></html>
